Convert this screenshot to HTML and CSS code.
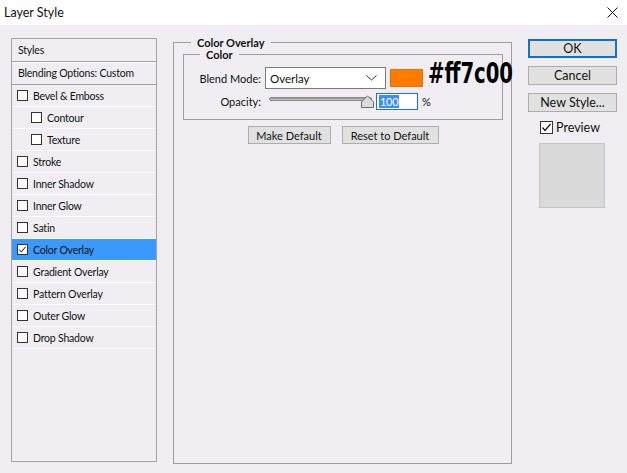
FILE: index.html
```html
<!DOCTYPE html>
<html lang="en">
  <head>
    <meta charset="UTF-8" />
    <meta name="viewport" content="width=device-width, initial-scale=1.0" />
    <title>Layer Style</title>
    <link rel="stylesheet" href="styles.css">
  </head>
  <body>
    <div class="titlebar">
      <span class="title">Layer Style</span>
      <svg class="close" width="11" height="11" viewBox="0 0 11 11">
        <path d="M0.5 0.5 L10.5 10.5 M10.5 0.5 L0.5 10.5" stroke="#111" stroke-width="1" fill="none" />
      </svg>
    </div>

    <div class="dialog">
      <div class="styles_list">
        <div class="list_head">Styles</div>
        <div class="list_blend">Blending Options: Custom</div>
        <div class="item"><span class="box"></span>Bevel &amp; Emboss</div>
        <div class="item sub"><span class="box"></span>Contour</div>
        <div class="item sub"><span class="box"></span>Texture</div>
        <div class="item"><span class="box"></span>Stroke</div>
        <div class="item"><span class="box"></span>Inner Shadow</div>
        <div class="item"><span class="box"></span>Inner Glow</div>
        <div class="item"><span class="box"></span>Satin</div>
        <div class="item active">
          <span class="box">
            <svg width="11" height="11" viewBox="0 0 11 11"><polyline points="1.5,5.5 4,8.5 9.5,2" stroke="#111" stroke-width="1.2" fill="none" /></svg>
          </span>Color Overlay
        </div>
        <div class="item"><span class="box"></span>Gradient Overlay</div>
        <div class="item"><span class="box"></span>Pattern Overlay</div>
        <div class="item"><span class="box"></span>Outer Glow</div>
        <div class="item"><span class="box"></span>Drop Shadow</div>
      </div>

      <div class="panel">
        <div class="frame_head panel_head"><span class="frame_title">Color Overlay</span></div>
        <div class="panel_body">
          <div class="group">
            <div class="frame_head group_head"><span class="frame_title">Color</span></div>
            <div class="group_body">
              <div class="row">
                <label class="lbl">Blend Mode:</label>
                <div class="select">
                  <span>Overlay</span>
                  <svg width="11" height="6" viewBox="0 0 11 6"><polyline points="0.5,0.5 5.5,5 10.5,0.5" stroke="#333" stroke-width="1" fill="none" /></svg>
                </div>
                <span class="swatch"></span>
              </div>
              <div class="row row_opacity">
                <label class="lbl">Opacity:</label>
                <div class="slider">
                  <span class="track"></span>
                  <svg class="thumb" width="13" height="13" viewBox="0 0 13 13">
                    <path d="M0.5 12.5 L0.5 7 L6.5 0.8 L12.5 7 L12.5 12.5 Z" fill="#dcdcdc" stroke="#6d6d6d" stroke-width="1" />
                  </svg>
                </div>
                <div class="num"><span class="num_sel">100</span></div>
                <span class="pct">%</span>
              </div>
            </div>
            <span class="hex">#ff7c00</span>
          </div>
          <div class="defaults">
            <button class="btn btn_make">Make Default</button>
            <button class="btn btn_reset">Reset to Default</button>
          </div>
        </div>
      </div>

      <div class="side">
        <button class="btn side_btn primary">OK</button>
        <button class="btn side_btn">Cancel</button>
        <button class="btn side_btn">New Style...</button>
        <div class="preview_check">
          <span class="box">
            <svg width="11" height="11" viewBox="0 0 11 11"><polyline points="1.5,5.5 4,8.5 9.5,2" stroke="#111" stroke-width="1.2" fill="none" /></svg>
          </span>Preview
        </div>
        <div class="preview"></div>
      </div>
    </div>
  </body>
</html>
```

FILE: styles.css
```css
* {
  margin: 0;
  padding: 0;
  box-sizing: border-box;
}

body {
  font-family: Lato, "Liberation Sans", sans-serif;
  font-size: 11px;
  color: #111;
  background-color: #f0eef3;
  width: 627px;
  height: 473px;
  overflow: hidden;
}

.titlebar {
  height: 25px;
  background-color: #fff;
  display: flex;
  align-items: center;
  justify-content: space-between;
  padding: 0 9px 1px 4px;
}

.title {
  font-size: 12.5px;
  color: #111;
}

.close {
  display: block;
}

.dialog {
  display: flex;
  align-items: flex-start;
  padding-left: 11px;
}

/* left list */
.styles_list {
  margin-top: 13px;
  width: 146px;
  height: 424px;
  border: 1px solid #a3a2a6;
  font-size: 10.5px;
  letter-spacing: -0.2px;
}

.list_head {
  height: 23px;
  line-height: 22px;
  padding-left: 6px;
  border-bottom: 1px solid #a3a2a6;
  box-shadow: 0 1px 0 #fff;
}

.list_blend {
  height: 22px;
  line-height: 21px;
  margin-top: 1px;
  padding-left: 6px;
  border-bottom: 1px solid #a3a2a6;
}

.item {
  height: 22px;
  display: flex;
  align-items: center;
  padding-left: 5px;
  border-bottom: 1px solid #fdfdfd;
}

.item.sub {
  padding-left: 19px;
}

.item.active {
  background-color: #3c99fc;
}

.box {
  width: 11px;
  height: 11px;
  border: 1px solid #333;
  background-color: #fff;
  margin-right: 5px;
  display: flex;
  align-items: center;
  justify-content: center;
  flex-shrink: 0;
}

.box svg {
  display: block;
}

/* framed boxes with a title sitting on the top line */
.frame_head {
  display: flex;
  align-items: flex-end;
  height: 12px;
}

.frame_head::before,
.frame_head::after {
  content: "";
  height: 6px;
  border-top: 1px solid #9e9da2;
}

.frame_head::before {
  border-left: 1px solid #9e9da2;
}

.frame_head::after {
  flex: 1;
  border-right: 1px solid #9e9da2;
}

.frame_title {
  align-self: center;
  font-weight: bold;
  line-height: 12px;
  padding: 0 6px;
}

/* center panel */
.panel {
  margin-left: 16px;
  margin-top: 12px;
  width: 339px;
}

.panel_head::before {
  width: 17px;
}

.panel_body {
  height: 415px;
  border: 1px solid #9e9da2;
  border-top: none;
  padding: 0 8px 0 9px;
}

.group {
  position: relative;
}

.group_head::before {
  width: 16px;
}

.group_body {
  border: 1px solid #9e9da2;
  border-top: none;
  padding: 6px 0 9px 0;
}

.row {
  display: flex;
  align-items: center;
  height: 22px;
}

.row_opacity {
  margin-top: 4px;
  height: 17px;
}

.lbl {
  width: 77px;
  text-align: right;
  margin-right: 4px;
}

.select {
  width: 121px;
  height: 22px;
  background-color: #fff;
  border: 1px solid #7a7a7a;
  display: flex;
  align-items: center;
  justify-content: space-between;
  padding: 0 8px 0 4px;
  font-size: 11.5px;
}

.swatch {
  width: 33px;
  height: 18px;
  margin-left: 4px;
  background-color: #ff7c00;
  border: 1px solid #e36f05;
}

.hex {
  position: absolute;
  left: 245px;
  top: 9px;
  font-family: "DejaVu Sans Condensed", "DejaVu Sans", sans-serif;
  font-weight: bold;
  font-size: 28px;
  line-height: 32px;
  color: #000;
  transform: scaleX(0.78);
  transform-origin: left center;
  white-space: nowrap;
}

.slider {
  position: relative;
  width: 111px;
  height: 17px;
}

.track {
  position: absolute;
  left: 4px;
  top: 4px;
  width: 103px;
  height: 4px;
  border-radius: 2px;
  background: linear-gradient(#8e8e8e, #c9c9c9);
  border: 1px solid #8a8a8a;
}

.thumb {
  position: absolute;
  left: 96px;
  top: 2px;
  display: block;
}

.num {
  width: 42px;
  height: 17px;
  border: 1px solid #1f72d0;
  background-color: #fff;
  padding: 1px 2px;
  display: flex;
  align-items: center;
}

.num_sel {
  background-color: #3c8ff0;
  color: #fff;
  line-height: 13px;
  padding: 0 1px;
  letter-spacing: -0.3px;
}

.pct {
  margin-left: 4px;
}

.defaults {
  display: flex;
  justify-content: center;
  gap: 11px;
  margin-top: 6px;
}

.btn {
  font-family: Lato, "Liberation Sans", sans-serif;
  font-size: 11px;
  color: #111;
  background-color: #e1e1e1;
  border: 1px solid #adadad;
  height: 18px;
  cursor: pointer;
}

.btn_make {
  width: 83px;
}

.btn_reset {
  width: 97px;
}

/* right column */
.side {
  margin-left: 16px;
  margin-top: 14px;
  width: 89px;
  display: flex;
  flex-direction: column;
}

.side_btn {
  width: 89px;
  height: 19px;
  font-size: 12.5px;
  margin-bottom: 8px;
}

.side_btn.primary {
  border: 2px solid #0f73d2;
}

.preview_check {
  display: flex;
  align-items: center;
  height: 14px;
  padding-left: 12px;
  font-size: 12.5px;
}

.preview_check .box {
  width: 13px;
  height: 13px;
  margin-right: 3px;
}

.preview {
  margin-top: 9px;
  margin-left: 11px;
  width: 66px;
  height: 65px;
  background-color: #dadada;
  border: 1px solid #c4c4c4;
}
```
